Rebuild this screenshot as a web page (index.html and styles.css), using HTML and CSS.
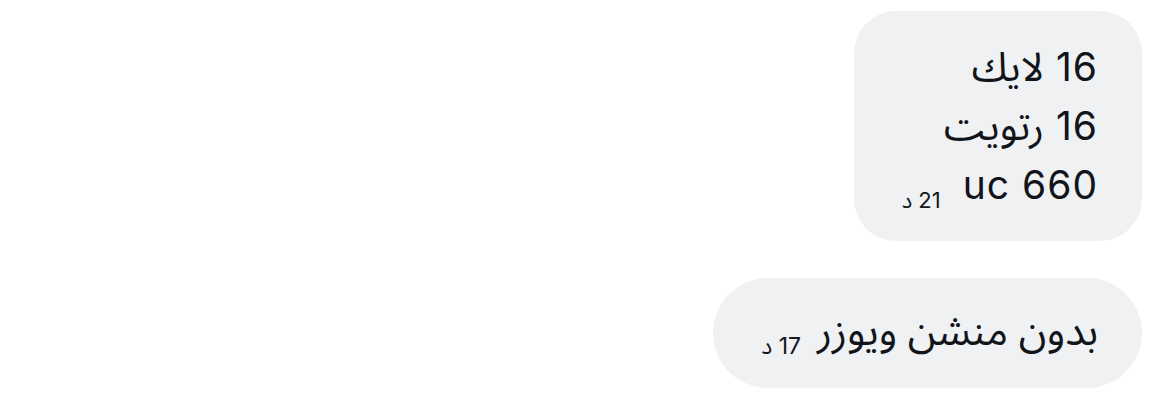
FILE: index.html
```html
<!DOCTYPE html>
<html lang="ar" dir="rtl">
<head>
<meta charset="utf-8">
<link rel="stylesheet" href="styles.css">
</head>
<body>
<div class="chat">
  <div class="bubble">
    <div class="line"><span class="msg">16 <span class="ar">لايك</span></span></div>
    <div class="line"><span class="msg">16 <span class="ar">رتويت</span></span></div>
    <div class="line"><span class="msg">660 uc</span><span class="time">21 د</span></div>
  </div>
  <div class="bubble wide">
    <div class="line"><span class="msg ar">بدون منشن ويوزر</span><span class="time">17 د</span></div>
  </div>
</div>
</body>
</html>
```

FILE: styles.css
```css
html, body {
  margin: 0;
  padding: 0;
  background: #ffffff;
}
body {
  font-family: Inter, "Liberation Sans", "Noto Sans Arabic", "DejaVu Sans", sans-serif;
  color: #111418;
}
.chat {
  display: flex;
  flex-direction: column;
  align-items: flex-start;
  gap: 37px;
  padding: 11px 28px 0 0;
}
.bubble {
  background: #eff1f3;
  border-radius: 42px;
  padding: 26px 44px 27px 48px;
  font-size: 39px;
}
.bubble.wide {
  border-radius: 55px;
  padding: 25px 44px 26px 48px;
}
.line {
  display: flex;
  align-items: baseline;
  height: 59px;
  line-height: 59px;
  white-space: nowrap;
}
.msg {
  unicode-bidi: isolate;
  letter-spacing: 1px;
}
.ar {
  display: inline-block;
  line-height: 59px;
  font-family: "Noto Sans Arabic", "DejaVu Sans", sans-serif;
  font-size: 40px;
  letter-spacing: 0;
}
.wide .ar {
  font-size: 41px;
}
.time {
  unicode-bidi: isolate;
  font-size: 22px;
  margin-right: 22px;
  position: relative;
  top: 9px;
  color: #15181c;
}
.wide .time {
  font-size: 23px;
  margin-right: 16px;
}
```
